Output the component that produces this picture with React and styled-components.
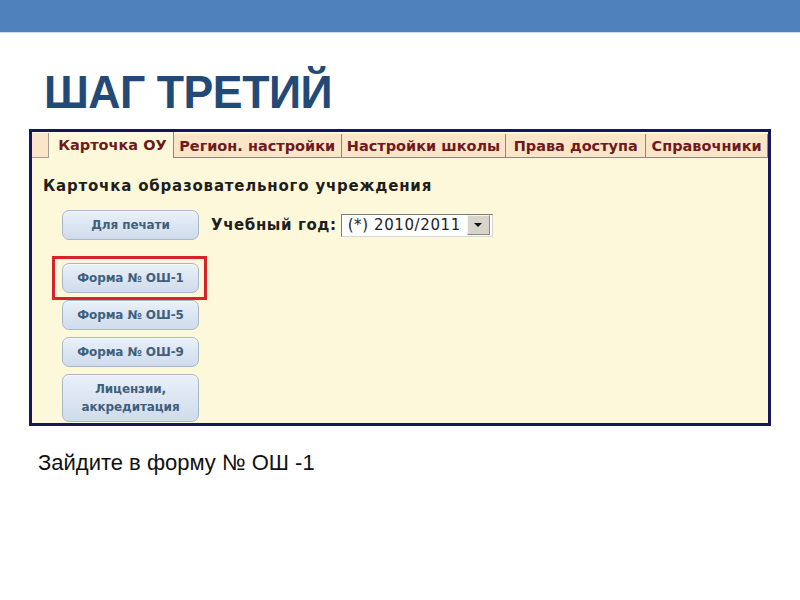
import React from 'react';
import styled, { createGlobalStyle } from 'styled-components';

const GlobalStyle = createGlobalStyle`
  html, body {
    margin: 0;
    padding: 0;
    background: #ffffff;
  }
  body {
    font-family: "Liberation Sans", Arial, sans-serif;
  }
`;

const Slide = styled.div`
  width: 800px;
  height: 600px;
  display: flex;
  flex-direction: column;
  background: #ffffff;
  overflow: hidden;
`;

const TopBar = styled.div`
  height: 32px;
  background: #4f81bd;
  border-bottom: 1px solid #c9daef;
`;

const Title = styled.h1`
  margin: 32px 0 0 44px;
  font-family: "Liberation Sans", Arial, sans-serif;
  font-weight: 700;
  font-size: 46px;
  line-height: 54px;
  color: #234a76;
  letter-spacing: -0.5px;
  transform: scaleX(0.97);
  transform-origin: left center;
`;

const Panel = styled.div`
  margin: 10px 0 0 29px;
  width: 736px;
  height: 291px;
  border: 3px solid #15165c;
  background: #fdf8d9;
  display: flex;
  flex-direction: column;
`;

const Tabs = styled.div`
  display: flex;
  align-items: flex-end;
  height: 26px;
  background: #fdf8d9;
`;

const Stub = styled.div`
  width: 16px;
  height: 24px;
  background: #fbe5c8;
  border: 1px solid #a59d92;
  border-left: none;
  border-top: none;
  margin-right: 2px;
`;

const Tab = styled.div`
  box-sizing: border-box;
  width: ${(p) => p.$w}px;
  height: ${(p) => (p.$active ? 26 : 24)}px;
  display: flex;
  align-items: center;
  justify-content: center;
  font-family: "DejaVu Sans", Verdana, sans-serif;
  font-weight: 700;
  font-size: 14.5px;
  color: #6e1a1c;
  white-space: nowrap;
  background: ${(p) => (p.$active ? '#fdf8d9' : '#fbe5c8')};
  border-right: 1px solid #8d8780;
  border-bottom: ${(p) => (p.$active ? 'none' : '1px solid #8d8780')};
  border-left: ${(p) => (p.$active ? '1px solid #ffffff' : 'none')};
`;

const Content = styled.div`
  padding: 19px 0 0 11px;
  display: flex;
  flex-direction: column;
`;

const Heading = styled.div`
  font-family: "DejaVu Sans", Verdana, sans-serif;
  font-size: 15px;
  font-weight: 600;
  color: #1e1e1e;
  line-height: 18px;
  letter-spacing: 0.8px;
`;

const Row = styled.div`
  display: flex;
  align-items: center;
  gap: 12px;
  margin: 15px 0 0 19px;
`;

const FormButton = styled.div`
  box-sizing: border-box;
  width: 137px;
  height: ${(p) => (p.$tall ? 48 : 30)}px;
  display: flex;
  align-items: center;
  justify-content: center;
  text-align: center;
  border: 1px solid #a8b7c8;
  border-radius: 7px;
  background: linear-gradient(#e9f0f8, #cfdcec);
  box-shadow: inset 0 1px 0 #f6f9fc;
  font-family: "DejaVu Sans", Verdana, sans-serif;
  font-weight: 700;
  font-size: 12px;
  line-height: 18px;
  color: #3f5f7d;
  letter-spacing: -0.1px;
`;

const YearLabel = styled.span`
  font-family: "DejaVu Sans", Verdana, sans-serif;
  font-weight: 700;
  font-size: 15px;
  color: #1e1e1e;
  letter-spacing: 0.6px;
`;

const YearField = styled.div`
  display: flex;
  align-items: center;
  gap: 4px;
`;

const Select = styled.div`
  box-sizing: border-box;
  width: 152px;
  height: 23px;
  display: flex;
  align-items: center;
  justify-content: space-between;
  background: #ffffff;
  border: 1px solid #7a7a7a;
  border-right-color: #d6d6d6;
  border-bottom-color: #d6d6d6;
  padding: 0 2px 0 6px;
  font-family: "DejaVu Sans", Verdana, sans-serif;
  font-size: 15px;
  letter-spacing: 0.6px;
  color: #222;
`;

const Arrow = styled.div`
  width: 21px;
  height: 18px;
  background: #d7d4cc;
  border: 1px solid #f4f3ef;
  border-right-color: #8a8780;
  border-bottom-color: #8a8780;
  display: flex;
  align-items: center;
  justify-content: center;
  &::after {
    content: '';
    border-left: 4px solid transparent;
    border-right: 4px solid transparent;
    border-top: 4px solid #111;
  }
`;

const Stack = styled.div`
  display: flex;
  flex-direction: column;
  align-items: flex-start;
  gap: 7px;
  margin: 23px 0 0 19px;
`;

const Highlight = styled.div`
  margin: -7px -8px -7px -10px;
  padding: 4px 5px 4px 7px;
  border: 3px solid #d8232a;
`;

const Caption = styled.p`
  margin: 24px 0 0 38px;
  font-family: "Liberation Sans", Arial, sans-serif;
  font-size: 22px;
  color: #111111;
`;

const tabs = [
  { label: 'Карточка ОУ', w: 123, active: true },
  { label: 'Регион. настройки', w: 168 },
  { label: 'Настройки школы', w: 165 },
  { label: 'Права доступа', w: 140 },
  { label: 'Справочники', w: 122 },
];

export default function App() {
  return (
    <>
      <GlobalStyle />
      <Slide>
        <TopBar />
        <Title>ШАГ ТРЕТИЙ</Title>
        <Panel>
          <Tabs>
            <Stub />
            {tabs.map((t) => (
              <Tab key={t.label} $w={t.w} $active={t.active}>
                {t.label}
              </Tab>
            ))}
          </Tabs>
          <Content>
            <Heading>Карточка образовательного учреждения</Heading>
            <Row>
              <FormButton>Для печати</FormButton>
              <YearField>
                <YearLabel>Учебный год:</YearLabel>
                <Select>
                  (*) 2010/2011
                  <Arrow />
                </Select>
              </YearField>
            </Row>
            <Stack>
              <Highlight>
                <FormButton>Форма № ОШ-1</FormButton>
              </Highlight>
              <FormButton>Форма № ОШ-5</FormButton>
              <FormButton>Форма № ОШ-9</FormButton>
              <FormButton $tall>
                Лицензии,
                <br />
                аккредитация
              </FormButton>
            </Stack>
          </Content>
        </Panel>
        <Caption>Зайдите в форму № ОШ -1</Caption>
      </Slide>
    </>
  );
}
